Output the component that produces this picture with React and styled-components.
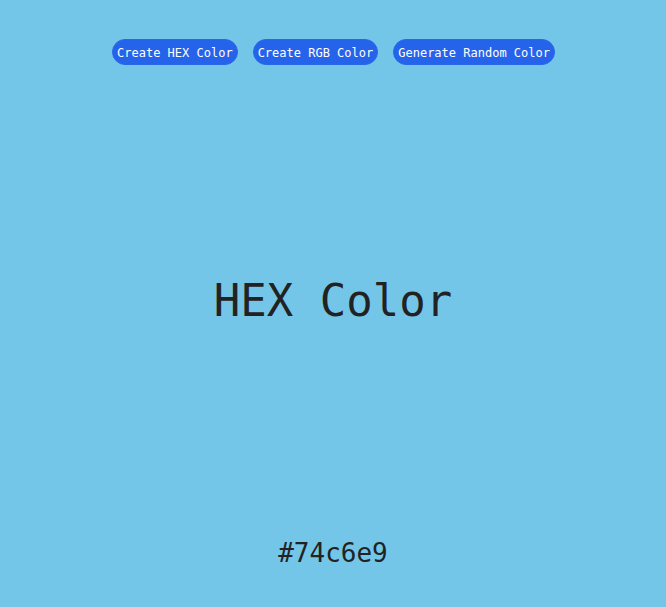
import React, { useState } from "react";
import styled, { createGlobalStyle } from "styled-components";

const GlobalStyle = createGlobalStyle`
  html, body {
    margin: 0;
    padding: 0;
  }
  body {
    font-family: "DejaVu Sans Mono", monospace;
  }
`;

const App = () => {
  const [type, setType] = useState("hex");
  const [color, setColor] = useState("#74c6e9");

  const randomHex = () => {
    const hex = "0123456789abcdef";
    let out = "#";
    for (let i = 0; i < 6; i++) out += hex[Math.floor(Math.random() * 16)];
    return out;
  };

  const randomRgb = () => {
    const c = () => Math.floor(Math.random() * 256);
    return `rgb(${c()},${c()},${c()})`;
  };

  const handleRandom = () => {
    setColor(type === "hex" ? randomHex() : randomRgb());
  };

  return (
    <>
      <GlobalStyle />
      <Page style={{ background: color }}>
        <Toolbar>
          <Button onClick={() => setType("hex")}>Create HEX Color</Button>
          <Button onClick={() => setType("rgb")}>Create RGB Color</Button>
          <Button onClick={handleRandom}>Generate Random Color</Button>
        </Toolbar>
        <Center>
          <Title>{type === "hex" ? "HEX Color" : "RGB Color"}</Title>
        </Center>
        <Value>{color}</Value>
      </Page>
    </>
  );
};

export default App;

const Page = styled.div`
  height: 100vh;
  display: flex;
  flex-direction: column;
  align-items: center;
  color: #222;
`;
const Toolbar = styled.div`
  display: flex;
  gap: 15px;
  padding-top: 39px;
  padding-left: 1px;
`;
const Button = styled.button`
  font-family: "DejaVu Sans Mono", monospace;
  font-size: 12px;
  font-weight: 500;
  height: 26px;
  padding: 1px 4px 0;
  border: 1px solid #2a66ea;
  border-radius: 13px;
  background: #2563eb;
  color: #fff;
  cursor: pointer;
`;
const Center = styled.div`
  flex: 1;
  display: flex;
  align-items: center;
  justify-content: center;
`;
const Title = styled.h1`
  margin: 0;
  font-size: 44px;
  font-weight: 400;
  transform: translateY(-1px);
`;
const Value = styled.h3`
  margin: 0 0 39px;
  font-size: 26px;
  font-weight: 400;
  line-height: 30px;
`;
